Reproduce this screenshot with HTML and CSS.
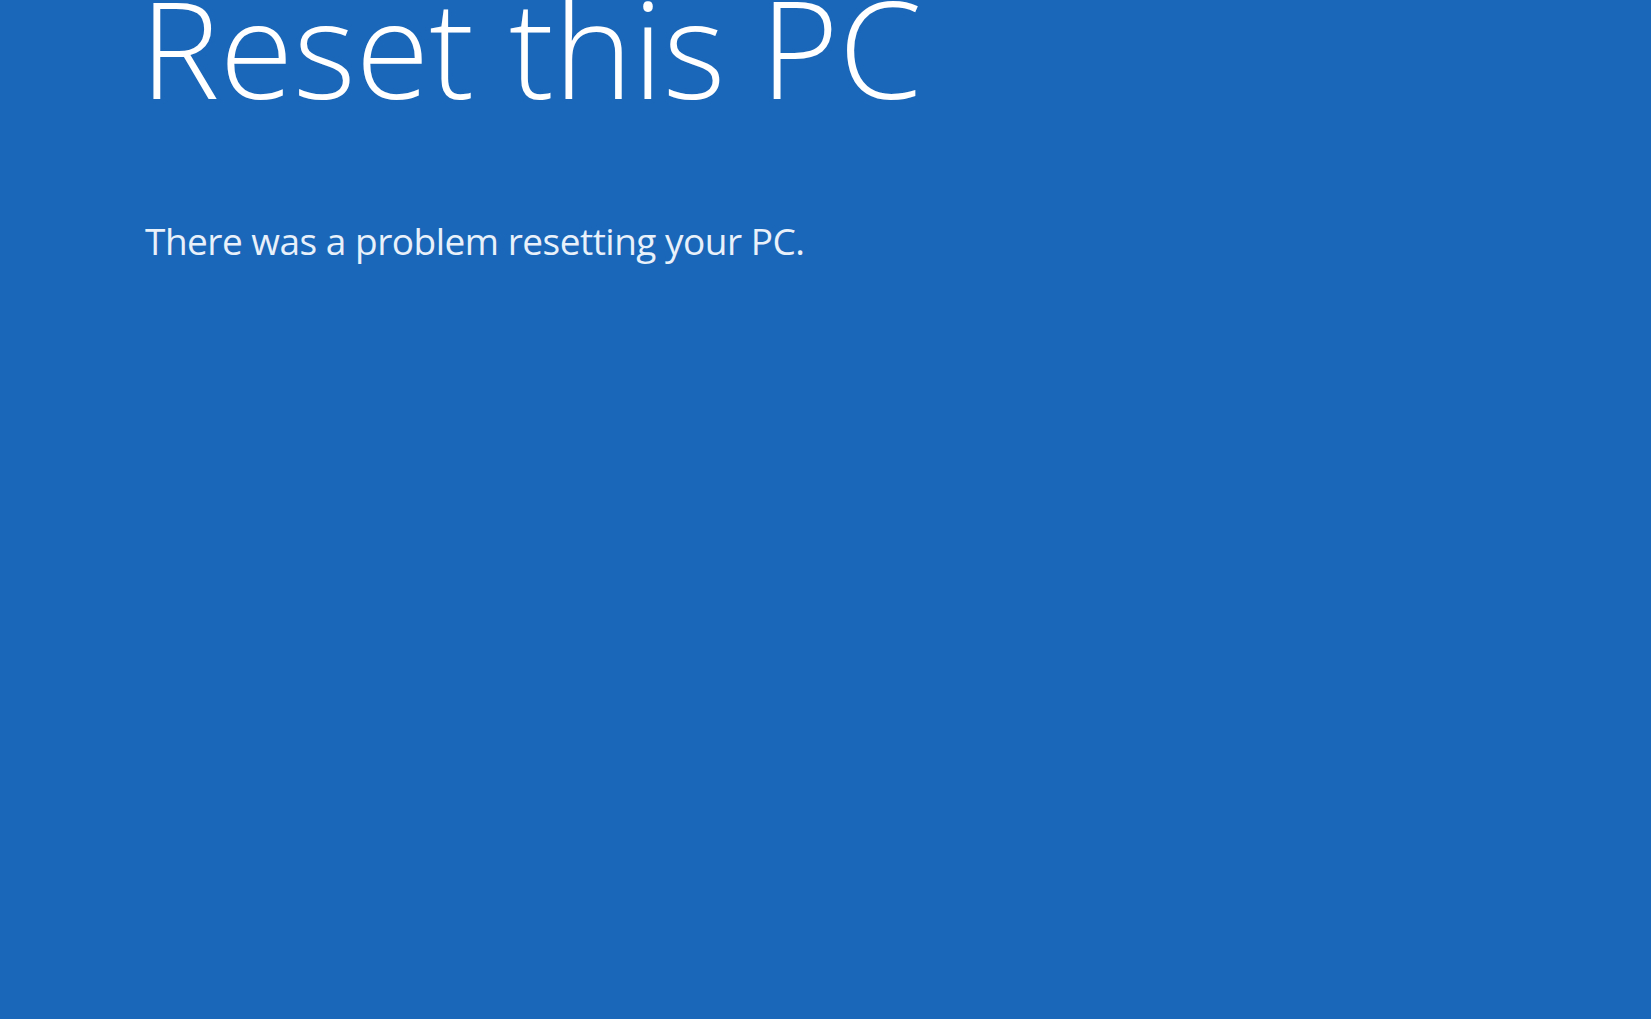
FILE: index.html
```html
<!DOCTYPE html>
<html lang="en">
<head>
  <meta charset="UTF-8">
  <meta name="viewport" content="width=device-width, initial-scale=1.0">
  <title>Reset this PC</title>
  <link rel="stylesheet" href="styles.css">
</head>
<body>
  <div class="reset-screen">
    <h1 class="reset-title">Reset this PC</h1>
    <p class="reset-message">There was a problem resetting your PC.</p>
  </div>
</body>
</html>
```

FILE: styles.css
```css
html, body {
  height: 100%;
}

body {
  margin: 0;
  background-color: #1a66b8;
  font-family: "Open Sans", "Noto Sans", sans-serif;
  color: #ffffff;
  overflow: hidden;
}

.reset-screen {
  padding-left: 140px;
}

.reset-title {
  margin: -20px 0 0 0;
  font-size: 134px;
  font-weight: 300;
  line-height: 1;
  color: #ffffff;
}

.reset-message {
  margin: 108px 0 0 5px;
  font-size: 37px;
  font-weight: 400;
  letter-spacing: -0.5px;
  line-height: 1;
  color: #e8f0fa;
}
```
